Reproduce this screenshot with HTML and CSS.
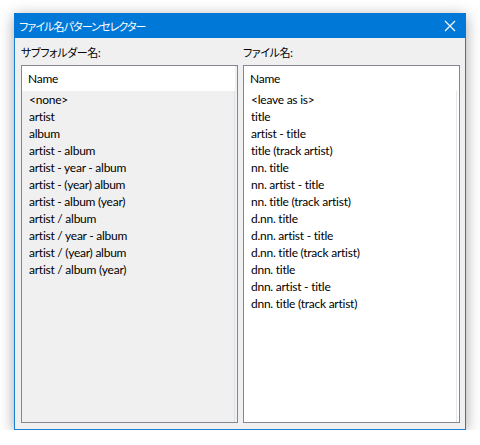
FILE: index.html
```html
<!DOCTYPE html>
<html lang="ja">
<head>
  <meta charset="UTF-8">
  <meta name="viewport" content="width=device-width, initial-scale=1.0">
  <title>ファイル名パターンセレクター</title>
  <link rel="stylesheet" href="styles.css">
</head>
<body>

  <!-- Dialog window -->
  <div class="window">
    <div class="titlebar">
      <span class="title">ファイル名パターンセレクター</span>
      <svg class="close" width="12" height="12" viewBox="0 0 12 12">
        <path d="M1 1 L11 11 M11 1 L1 11" stroke="#fff" stroke-width="1.2" fill="none"/>
      </svg>
    </div>

    <div class="content">
      <!-- Subfolder column -->
      <div class="column">
        <div class="label">サブフォルダー名:</div>
        <div class="listbox disabled">
          <div class="list-header">Name</div>
          <div class="row">&lt;none&gt;</div>
          <div class="row">artist</div>
          <div class="row">album</div>
          <div class="row">artist - album</div>
          <div class="row">artist - year - album</div>
          <div class="row">artist - (year) album</div>
          <div class="row">artist - album (year)</div>
          <div class="row">artist / album</div>
          <div class="row">artist / year - album</div>
          <div class="row">artist / (year) album</div>
          <div class="row">artist / album (year)</div>
        </div>
      </div>

      <!-- File name column -->
      <div class="column">
        <div class="label">ファイル名:</div>
        <div class="listbox">
          <div class="list-header">Name</div>
          <div class="row">&lt;leave as is&gt;</div>
          <div class="row">title</div>
          <div class="row">artist - title</div>
          <div class="row">title (track artist)</div>
          <div class="row">nn. title</div>
          <div class="row">nn. artist - title</div>
          <div class="row">nn. title (track artist)</div>
          <div class="row">d.nn. title</div>
          <div class="row">d.nn. artist - title</div>
          <div class="row">d.nn. title (track artist)</div>
          <div class="row">dnn. title</div>
          <div class="row">dnn. artist - title</div>
          <div class="row">dnn. title (track artist)</div>
        </div>
      </div>
    </div>
  </div>

</body>
</html>
```

FILE: styles.css
```css
* {
  margin: 0;
  padding: 0;
  box-sizing: border-box;
}

body {
  background-color: #ffffff;
  font-family: Lato, "Noto Sans", "Noto Sans CJK JP", sans-serif;
  font-size: 12px;
  letter-spacing: -0.25px;
  color: #000;
}

.window {
  margin: 13px 0 0 14px;
  width: 452px;
  height: 417px;
  border: 1px solid #1a7fd4;
  border-top: none;
  background-color: #f0f0f0;
  box-shadow: 0 3px 14px rgba(0, 0, 0, 0.35);
  display: flex;
  flex-direction: column;
}

.titlebar {
  height: 25px;
  margin: 0 -1px;
  background-color: #0078d7;
  color: #fff;
  display: flex;
  align-items: center;
  justify-content: space-between;
  padding: 0 10px 0 5px;
}

.title {
  font-family: "Noto Sans CJK JP", sans-serif;
  font-feature-settings: "palt";
  font-size: 11px;
  letter-spacing: -0.9px;
}

.close {
  display: block;
}

.content {
  flex: 1;
  display: grid;
  grid-template-columns: 217px 217px;
  column-gap: 5px;
  padding: 0 5px 6px 6px;
}

.column {
  display: flex;
  flex-direction: column;
}

.label {
  font-family: "Noto Sans CJK JP", sans-serif;
  font-feature-settings: "palt";
  font-size: 11px;
  letter-spacing: -0.4px;
  line-height: 15px;
  padding-top: 7px;
  margin-bottom: 5px;
}

.listbox {
  flex: 1;
  border: 1px solid #828790;
  background-color: #fff;
  box-shadow: inset -2px 0 0 #fff, inset -3px 0 0 #e3e7ee;
}

.listbox.disabled {
  background-color: #f0f0f0;
  box-shadow: inset -2px 0 0 #f0f0f0, inset -3px 0 0 #dfe3ea;
}

.list-header {
  height: 25px;
  line-height: 25px;
  padding-left: 6px;
  margin-right: 2px;
  background-color: #fff;
}

.row {
  height: 17px;
  line-height: 17px;
  padding-left: 7px;
  white-space: nowrap;
}
```
